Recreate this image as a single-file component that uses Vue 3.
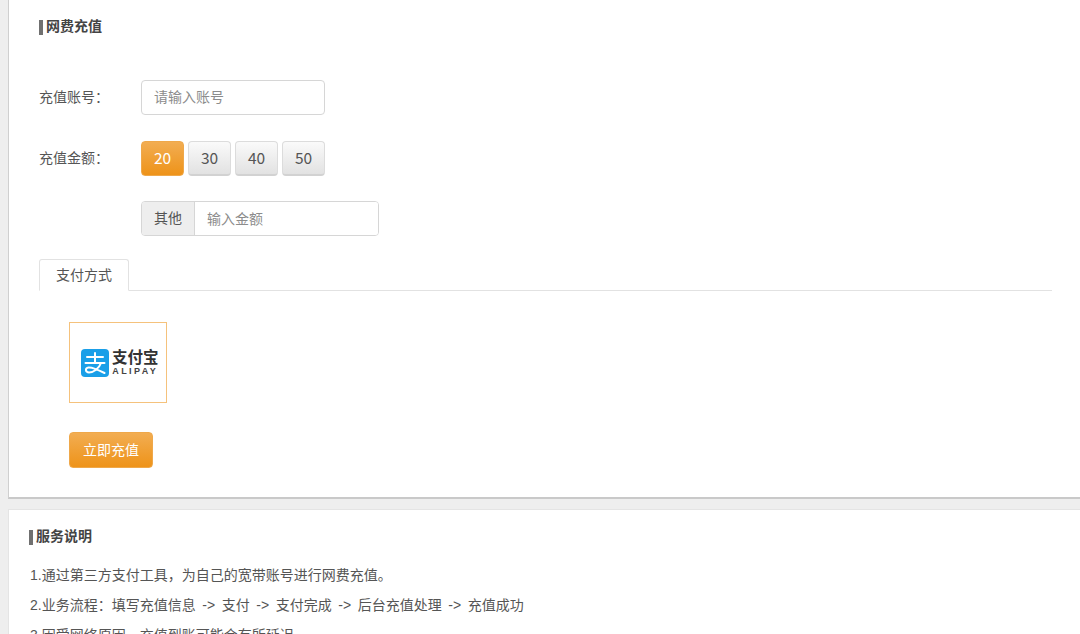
<script setup>
const amounts = [20, 30, 40, 50]
const notes = [
  '1.通过第三方支付工具，为自己的宽带账号进行网费充值。',
  '2.业务流程：填写充值信息 -> 支付 -> 支付完成 -> 后台充值处理 -> 充值成功',
  '3.因受网络原因，充值到账可能会有所延迟。'
]
</script>

<template>
  <div class="page">
    <section class="card top">
      <h2 class="title"><span class="title-text">网费充值</span></h2>
      <div class="row account">
        <span class="label">充值账号：</span>
        <input class="field account-input" placeholder="请输入账号" />
      </div>
      <div class="row amount">
        <span class="label">充值金额：</span>
        <div class="amounts">
          <button v-for="(a, i) in amounts" :key="a" class="amt" :class="{ active: i === 0 }">{{ a }}</button>
        </div>
      </div>
      <div class="other">
        <span class="addon">其他</span>
        <input class="other-input" placeholder="输入金额" />
      </div>
      <div class="tabs">
        <span class="tab">支付方式</span>
      </div>
      <div class="pay">
        <div class="logo-box">
          <svg class="mark" width="28" height="28" viewBox="0 0 28 28">
            <rect width="28" height="28" rx="4" fill="#1a9fe8" />
            <path d="M6 8h16M14 4v10M4.500 14h19M20 14c-2 6-8 9.500-12 9.500-3.500 0-4.500-4.500-.5-5 4-.5 9 2 16 5.500" fill="none" stroke="#fff" stroke-width="2" stroke-linecap="round" />
          </svg>
          <div class="brand">
            <span class="brand-cn">支付宝</span>
            <span class="brand-en">ALIPAY</span>
          </div>
        </div>
        <button class="submit">立即充值</button>
      </div>
    </section>
    <section class="card bottom">
      <h2 class="title"><span class="title-text">服务说明</span></h2>
      <p v-for="n in notes" :key="n" class="note">{{ n }}</p>
    </section>
  </div>
</template>

<style>
html, body { margin: 0; background: #eeeeee; overflow: hidden; }
</style>

<style scoped>
.page {
  height: 634px;
  overflow: hidden;
  padding-left: 8px;
  font-family: "Liberation Sans", "Noto Sans CJK SC", sans-serif;
  font-size: 14px;
  color: #555;
}
.card {
  background: #fff;
  border: 1px solid #cfcfcf;
  border-right: none;
  box-sizing: border-box;
}
.top {
  height: 499px;
  border-top: none;
  border-bottom: 2px solid #c9c9c9;
  padding: 17px 0 0 30px;
}
.bottom {
  margin-top: 10px;
  border-color: #e4e4e4;
  padding: 17px 0 0 20px;
}
.title {
  display: flex;
  align-items: center;
  gap: 3px;
  margin: 0;
  height: 20px;
  line-height: 20px;
  font-size: 14px;
  font-weight: 700;
  color: #444;
}
.title::before {
  content: "";
  width: 4px;
  height: 15px;
  background: #707070;
}
.title-text { padding-bottom: 3px; }
.row { display: flex; align-items: center; }
.account { margin-top: 43px; }
.amount { margin-top: 26px; }
.label { width: 102px; flex: none; color: #555; padding-bottom: 3px; }
.field {
  box-sizing: border-box;
  width: 184px;
  height: 35px;
  border: 1px solid #d6d6d6;
  border-radius: 4px;
  padding: 0 12px 1px;
  font: inherit;
  outline: none;
}
input::placeholder { color: #8c8c8c; opacity: 1; }
.amounts { display: flex; gap: 4px; }
.amt {
  box-sizing: border-box;
  width: 43px;
  height: 35px;
  padding: 0 0 3px;
  border: 1px solid #dcdcdc;
  border-bottom: 2px solid #d2d2d2;
  border-radius: 4px;
  background: linear-gradient(#fafafa, #e2e2e2);
  font-family: "Noto Sans CJK SC", sans-serif;
  font-size: 15.500px;
  color: #555;
}
.amt.active {
  border: 1px solid #efa84a;
  background: linear-gradient(#f2ad52, #ee9319);
  color: #fff;
}
.other {
  display: flex;
  box-sizing: border-box;
  width: 238px;
  height: 35px;
  margin: 25px 0 0 102px;
  border: 1px solid #d6d6d6;
  border-radius: 4px;
  overflow: hidden;
}
.addon {
  width: 53px;
  flex: none;
  box-sizing: border-box;
  text-align: center;
  line-height: 33px;
  background: #eeeeee;
  border-right: 1px solid #d6d6d6;
  color: #555;
}
.other-input {
  flex: 1;
  min-width: 0;
  border: none;
  outline: none;
  padding: 0 12px;
  font: inherit;
}
.tabs {
  display: flex;
  margin: 23px 28px 0 0;
  border-bottom: 1px solid #e2e2e2;
}
.tab {
  box-sizing: border-box;
  width: 90px;
  height: 32px;
  margin-bottom: -1px;
  line-height: 30px;
  text-align: center;
  background: #fff;
  border: 1px solid #e2e2e2;
  border-bottom-color: #fff;
  border-radius: 3px 3px 0 0;
  color: #555;
}
.pay { padding: 31px 0 0 30px; }
.logo-box {
  box-sizing: border-box;
  width: 98px;
  height: 81px;
  border: 1px solid #f5c27c;
  display: flex;
  align-items: center;
  gap: 3px;
  padding: 0 0 0 11px;
}
.mark { flex: none; }
.brand { display: flex; flex-direction: column; align-items: center; color: #333; }
.brand-cn { font-size: 15.500px; line-height: 17px; font-weight: 700; white-space: nowrap; }
.brand-en { font-size: 9px; line-height: 10px; letter-spacing: 2.400px; font-weight: 700; color: #444; }
.submit {
  display: block;
  box-sizing: border-box;
  width: 84px;
  height: 36px;
  margin-top: 29px;
  padding: 0 0 3px;
  border: 1px solid #efa84a;
  border-radius: 4px;
  background: linear-gradient(#f2ad52, #ee9319);
  color: #fff;
  font: inherit;
}
.note {
  margin: 0;
  padding-left: 1px;
  height: 30px;
  line-height: 30px;
  color: #555;
  white-space: nowrap;
  word-spacing: 2.700px;
}
.title + .note { margin-top: 13px; }
</style>
